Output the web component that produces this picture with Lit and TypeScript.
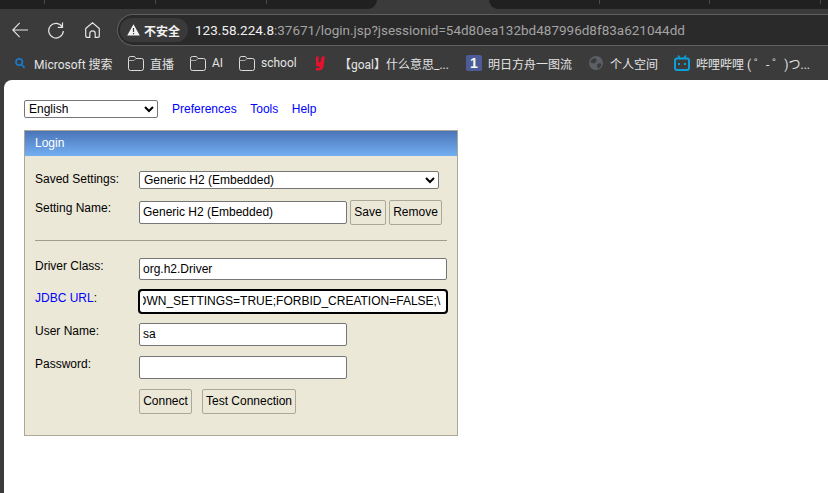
import { LitElement, html, css, svg } from "lit";
import { customElement } from "lit/decorators.js";

const folder = svg`<svg class="ic" width="16" height="15" viewBox="0 0 16 15" fill="none" stroke="#dcdcdc" stroke-width="1"><path d="M2.500 14.500h11a2 2 0 0 0 2-2V4.500a2 2 0 0 0-2-2H8L7 1.200l-.5-.7H2.500a2 2 0 0 0-2 2v10a2 2 0 0 0 2 2z"/><path d="M.5 4.500H6L7.800 2.600" stroke="#a8a8a8"/></svg>`;

const marks = [
  { w: 113, label: "Microsoft 搜索", gap: 9, icon: svg`<svg class="ic" width="10" height="12" viewBox="0 0 10 12" fill="none" stroke="#1a78c8" stroke-width="1.800"><circle cx="4.200" cy="5" r="3.200"/><path d="M6.500 7.500 9.600 10.800"/></svg>` },
  { w: 62, label: "直播", gap: 6, icon: folder },
  { w: 49, label: "AI", gap: 6, icon: folder },
  { w: 76, label: "school", gap: 6, icon: folder },
  { w: 151, label: "【goal】什么意思_...", gap: 14, icon: svg`<svg class="ic" width="10" height="15" viewBox="0 0 10 15"><path d="M1 0.500h2.700l-.2 5.200c0 1 1.700 1 2 0L6.900.5h3L8.500 10.500C8 13.800 5.200 14.800 .8 14.600l.3-2.500c2.200.1 3.700-.1 4.200-1.700-1.300.9-4.200.7-4.300-2.200z" fill="#e8112d"/></svg>` },
  { w: 123, label: "明日方舟一图流", gap: 6, icon: html`<span class="tile">1</span>` },
  { w: 85, label: "个人空间", gap: 7, icon: svg`<svg class="ic" width="14" height="14" viewBox="0 0 14 14"><circle cx="7" cy="7" r="7" fill="#5b5f66"/><path d="M2.500 3.500 6.500 2l1.300 2.500L5.500 7.500 1.500 6.500zM8.500 8l3-1 1 2.500-3 3L8 11z" fill="#3b3b3b"/></svg>` },
  { w: 135, label: "哔哩哔哩 ( ゜- ゜)つ...", gap: 6, icon: svg`<svg class="ic" width="16" height="16" viewBox="0 0 16 16" fill="none" stroke="#0d9fd8"><rect x="1" y="3.500" width="14" height="11.500" rx="2" stroke-width="2"/><path d="M4 .5 6 3M12 .5 10 3" stroke-width="1.500"/><path d="M5 8v2M11 8v2" stroke-width="2"/></svg>` },
];

@customElement("app-root")
export class AppRoot extends LitElement {
  static styles = css`
    :host { display: block; width: 828px; height: 493px; overflow: hidden; background: #3b3b3b; font-family: "Liberation Sans", Arial, sans-serif; font-size: 12px; color: #000; }
    .tabs { height: 14px; display: flex; background: #3b3b3b; }
    .tabgroup { height: 9px; background: #202020; display: flex; }
    .tabgroup.left { width: 377px; border-bottom-right-radius: 9px; }
    .gapt { width: 112px; flex: none; }
    .tabgroup.right { flex: 1; border-bottom-left-radius: 9px; }
    .tab { border-right: 1px solid #4a4a4a; height: 4px; box-sizing: border-box; flex: none; }
    .left .t1 { width: 45px; } .left .t2, .left .t3 { width: 111px; }
    .right .t1 { width: 111px; } .right .t2 { width: 110px; } .right .t3 { width: 111px; }
    .toolbar { height: 32px; display: flex; align-items: center; }
    .nav { width: 117px; flex: none; display: flex; align-items: center; padding-left: 12px; box-sizing: border-box; }
    .nav svg { display: block; flex: none; }
    .nav .r { margin-left: 20px; } .nav .h { margin-left: 21px; }
    .omni { flex: 1; height: 32px; box-sizing: border-box; border: 1px solid #5f5f5f; border-right: none; border-radius: 16px 0 0 16px; background: #2a2a2a; display: flex; align-items: center; padding-left: 2px; font-family: Roboto, "Noto Sans CJK SC", sans-serif; white-space: nowrap; overflow: hidden; }
    .chip { width: 68px; height: 24px; flex: none; border-radius: 12px; background: #3a3a3a; color: #f2f2f2; font-size: 12px; font-weight: 700; display: flex; align-items: center; gap: 4px; padding-left: 7px; box-sizing: border-box; font-family: "Noto Sans CJK SC", sans-serif; }
    .url { margin-left: 7px; font-size: 13.5px; color: #a3a3a3; }
    .url b { font-weight: 400; color: #f0f0f0; }
    .marks { height: 34px; padding-left: 15px; display: flex; align-items: center; font-family: Roboto, "Noto Sans CJK SC", sans-serif; font-size: 12px; color: #e3e3e3; white-space: nowrap; }
    .mark { display: flex; align-items: center; flex: none; }
    .ic { display: block; flex: none; }
    .tile { width: 16px; height: 16px; flex: none; border-radius: 2px; background: #4e5b9b; color: #f4ffe6; font: 700 14px/16px "Liberation Sans", sans-serif; text-align: center; }
    .body { height: 413px; padding-left: 4px; }
    .page { height: 100%; background: #fff; border-top-left-radius: 8px; padding: 20px 0 0 20px; box-sizing: border-box; }
    .top { display: flex; align-items: center; height: 18px; }
    select { font: 12px "Liberation Sans", Arial, sans-serif; box-sizing: border-box; height: 18px; background: #fff; color: #000; border: 1px solid #767676; border-radius: 2px; padding: 0; margin: 0; }
    .lang { width: 134px; }
    .top a { color: #0000ff; text-decoration: none; }
    .top .links { display: flex; gap: 13.5px; margin-left: 14px; }
    .box { width: 434px; height: 306px; margin-top: 12px; box-sizing: border-box; border: 1px solid #aca899; background: #ece8d8; }
    .head { height: 25px; padding-left: 10px; color: #fff; line-height: 25px; background: linear-gradient(#4a74b8, #73aff2); }
    .form { padding: 15px 10px 0; display: grid; grid-template-columns: 104px 1fr; align-items: start; }
    .lbl { line-height: 14px; padding-top: 1px; }
    .lbl a { color: #0000ff; }
    input { font: 12px "Liberation Sans", Arial, sans-serif; box-sizing: border-box; height: 23px; background: #fff; color: #000; border: 1px solid #767676; border-radius: 2px; padding: 0 3px 2px; margin: 0; display: block; outline: none; }
    .wide { width: 308px; } .mid { width: 208px; }
    .driver { height: 22px; padding-bottom: 1px; }
    .focus { outline: 2px solid #000; outline-offset: -1px; height: 23px; border-radius: 3px; }
    button { font: 12px "Liberation Sans", Arial, sans-serif; height: 25px; box-sizing: border-box; background: #ece8d8; color: #000; border: 1px solid #aca899; border-radius: 2px; padding: 0 0 2px; margin: 0; white-space: nowrap; }
    .row { display: flex; align-items: flex-start; }
    .saved { width: 300px; height: 18px; display: block; padding-bottom: 1px; }
    .r-saved { height: 29px; }
    .setname { gap: 3px; }
    .setname input { margin-top: 1px; }
    .setname .save { width: 36px; }
    .setname .rem { width: 53px; }
    .rule { grid-column: 1 / -1; height: 1px; background: #a09d90; margin: 15px 0 17px; width: 412px; }
    .c2 { height: 32px; }
    .c3 { height: 33px; }
    .buttons { gap: 10px; }
    .connect { width: 53px; } .test { width: 94px; }
  `;

  firstUpdated() {
    const el = this.renderRoot.querySelector(".focus") as HTMLInputElement;
    const ctx = document.createElement("canvas").getContext("2d")!;
    ctx.font = '12px "Liberation Sans"';
    el.scrollLeft = ctx.measureText(el.value.slice(0, el.value.indexOf("OWN_SETTINGS"))).width + 6;
  }

  render() {
    return html`
      <div class="tabs">
        <div class="tabgroup left"><div class="tab t1"></div><div class="tab t2"></div><div class="tab t3"></div></div>
        <div class="gapt"></div>
        <div class="tabgroup right"><div class="tab t1"></div><div class="tab t2"></div><div class="tab t3"></div></div>
      </div>
      <div class="toolbar">
        <div class="nav">
          <svg width="16" height="16" viewBox="0 0 16 16" fill="none" stroke="#e6e6e6" stroke-width="1.100"><path d="M16 8H.8M7.700 .8.800 8l6.900 7.200"/></svg>
          <svg class="r" width="16" height="17" viewBox="0 0 16 17" fill="none" stroke="#e6e6e6" stroke-width="1.200"><path d="M14.300 5A7.300 7.300 0 1 0 15.300 9"/><path d="M14.500 .5v4.800H9.800"/></svg>
          <svg class="h" width="15" height="16" viewBox="0 0 15 16" fill="none" stroke="#e6e6e6" stroke-width="1.200"><path d="M.7 6.500 7.500.8l6.800 5.700V14a1.300 1.300 0 0 1-1.300 1.300h-2.800V11.500a2.700 2.700 0 0 0-5.400 0v3.800H2A1.300 1.300 0 0 1 .7 14z"/></svg>
        </div>
        <div class="omni">
          <div class="chip">
            <svg width="13" height="12" viewBox="0 0 13 12"><path fill-rule="evenodd" d="M6.500.3 12.800 11.600H.2zM5.900 4v4h1.200V4zM5.900 9v1.200h1.200V9z" fill="#f4f4f4"/></svg>
            <span>不安全</span>
          </div>
          <div class="url"><b>123.58.224.8</b>:37671/login.jsp?jsessionid=54d80ea132bd487996d8f83a621044dd</div>
        </div>
      </div>
      <div class="marks">
        ${marks.map((m) => html`<div class="mark" style="width:${m.w}px;gap:${m.gap}px">${m.icon}<span>${m.label}</span></div>`)}
      </div>
      <div class="body">
        <div class="page">
          <div class="top">
            <select class="lang"><option>English</option></select>
            <div class="links"><a href="#">Preferences</a><a href="#">Tools</a><a href="#">Help</a></div>
          </div>
          <div class="box">
            <div class="head">Login</div>
            <div class="form">
              <div class="lbl">Saved Settings:</div>
              <div class="r-saved"><select class="saved"><option>Generic H2 (Embedded)</option></select></div>
              <div class="lbl">Setting Name:</div>
              <div class="row setname"><input class="mid" .value=${"Generic H2 (Embedded)"} /><button class="save">Save</button><button class="rem">Remove</button></div>
              <div class="rule"></div>
              <div class="lbl">Driver Class:</div>
              <div class="c2"><input class="wide driver" .value=${"org.h2.Driver"} /></div>
              <div class="lbl"><a>JDBC URL</a>:</div>
              <div class="c3"><input class="wide focus" .value=${"jdbc:h2:mem:test;MODE=MySQL;IGNORE_UNKNOWN_SETTINGS=TRUE;FORBID_CREATION=FALSE;\\          INIT=RUNSCRIPT"} /></div>
              <div class="lbl">User Name:</div>
              <div class="c3"><input class="mid" .value=${"sa"} /></div>
              <div class="lbl">Password:</div>
              <div class="c3"><input class="mid" type="password" /></div>
              <div></div>
              <div class="row buttons"><button class="connect">Connect</button><button class="test">Test Connection</button></div>
            </div>
          </div>
        </div>
      </div>
    `;
  }
}
